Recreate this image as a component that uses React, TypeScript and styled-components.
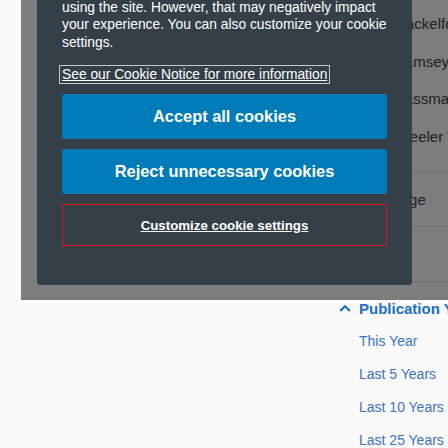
import styled, { createGlobalStyle } from 'styled-components';

const GlobalStyle = createGlobalStyle`
    html, body {
        margin:0;
        padding:0;
        background:#fafafa;
        overflow:hidden;
    }
`

const Page = styled.div`
    position:relative;
    width:448px;
    height:448px;
    overflow:hidden;
    background:#fafafa;
    font-family:"Liberation Sans", Arial, sans-serif;
    display:grid;
    grid-template-columns:339px 1fr;
`

const Main = styled.div`
    background:#fafafa;
`

const Sidebar = styled.div`
    display:flex;
    flex-direction:column;
    white-space:nowrap;
`

const AuthorList = styled.ul`
    list-style:none;
    margin:0;
    padding:5px 0 0 20px;
    height:171px;
    box-sizing:border-box;
`

const Author = styled.li`
    font-size:15px;
    line-height:37.7px;
    color:#444;
`

const FacetRow = styled.div`
    height:55px;
    border-top:1px solid #ddd;
    display:flex;
    align-items:center;
    padding-left:20px;
    font-size:15px;
    color:#444;
    box-sizing:border-box;
`

const FilterSection = styled.div`
    border-top:1px solid #ddd;
    padding-top:17px;
`

const FilterHead = styled.div`
    display:flex;
    align-items:center;
    gap:8px;
    height:18px;
    font-size:15px;
    font-weight:700;
    color:#1b6ec4;
`

const FilterList = styled.ul`
    list-style:none;
    margin:0;
    padding:8px 0 0 20px;
`

const FilterItem = styled.li`
    font-size:14px;
    line-height:33px;
    color:#3b74c6;
`

const Overlay = styled.div`
    position:absolute;
    left:21px;
    top:0;
    right:0;
    height:300px;
    background:rgba(0,0,0,0.5);
    display:flex;
    flex-direction:column;
    justify-content:flex-end;
    padding:0 36px 15px 16px;
    overflow:hidden;
    box-sizing:border-box;
`

const Panel = styled.div`
    flex-shrink:0;
    background:#343f48;
    border-radius:3px;
    padding:20px 25px 39px 25px;
    color:#fff;
`

const Text = styled.p`
    margin:0;
    font-size:13.8px;
    line-height:17.5px;
    white-space:nowrap;
`

const NoticeLink = styled.a`
    display:inline-block;
    margin-top:14px;
    padding:0 2px;
    margin-left:-3px;
    font-size:13.8px;
    line-height:17px;
    color:#fff;
    text-decoration:underline;
    border:1px solid #c8c8c8;
`

const Buttons = styled.div`
    display:flex;
    flex-direction:column;
    gap:10px;
    margin-top:10px;
`

const Button = styled.button<{ $outline?: boolean }>`
    height:${p => p.$outline ? '42px' : '45px'};
    border:${p => p.$outline ? '1px solid #e0141e' : 'none'};
    border-radius:${p => p.$outline ? '0' : '3px'};
    background:${p => p.$outline ? 'transparent' : '#007bba'};
    color:#fff;
    font-family:inherit;
    font-weight:700;
    font-size:${p => p.$outline ? '13.3px' : '16.4px'};
    text-decoration:${p => p.$outline ? 'underline' : 'none'};
    cursor:pointer;
`

function Chevron(){
    return(
        <svg width="12" height="8" viewBox="0 0 12 8">
            <path d="M1.2 7 L6 2.2 L10.8 7" fill="none" stroke="#1b6ec4" strokeWidth="2.2"/>
        </svg>
    )
}

function App(){

    const authors = ['Tim Shackelford', 'Jack Ramsey Taylor', 'Ann Glassman', 'Jon Wheeler Tate']
    const facets = ['Language', 'Subject']
    const years = ['This Year', 'Last 5 Years', 'Last 10 Years', 'Last 25 Years']

    return(
        <>
            <GlobalStyle/>
            <Page>
                <Main/>
                <Sidebar>
                    <AuthorList>
                        {authors.map(a => <Author key={a}>{a}</Author>)}
                    </AuthorList>
                    {facets.map(f => <FacetRow key={f}>{f}</FacetRow>)}
                    <FilterSection>
                        <FilterHead>
                            <Chevron/>
                            <span>Publication Year</span>
                        </FilterHead>
                        <FilterList>
                            {years.map(y => <FilterItem key={y}>{y}</FilterItem>)}
                        </FilterList>
                    </FilterSection>
                </Sidebar>

                <Overlay>
                    <Panel>
                        <Text>
                            We use cookies to improve your experience on our site.<br/>
                            You can reject unnecessary cookies and continue<br/>
                            using the site. However, that may negatively impact<br/>
                            your experience. You can also customize your cookie<br/>
                            settings.
                        </Text>
                        <NoticeLink href="#">See our Cookie Notice for more information</NoticeLink>
                        <Buttons>
                            <Button>Accept all cookies</Button>
                            <Button>Reject unnecessary cookies</Button>
                            <Button $outline>Customize cookie settings</Button>
                        </Buttons>
                    </Panel>
                </Overlay>
            </Page>
        </>
    )
}

export default App;
